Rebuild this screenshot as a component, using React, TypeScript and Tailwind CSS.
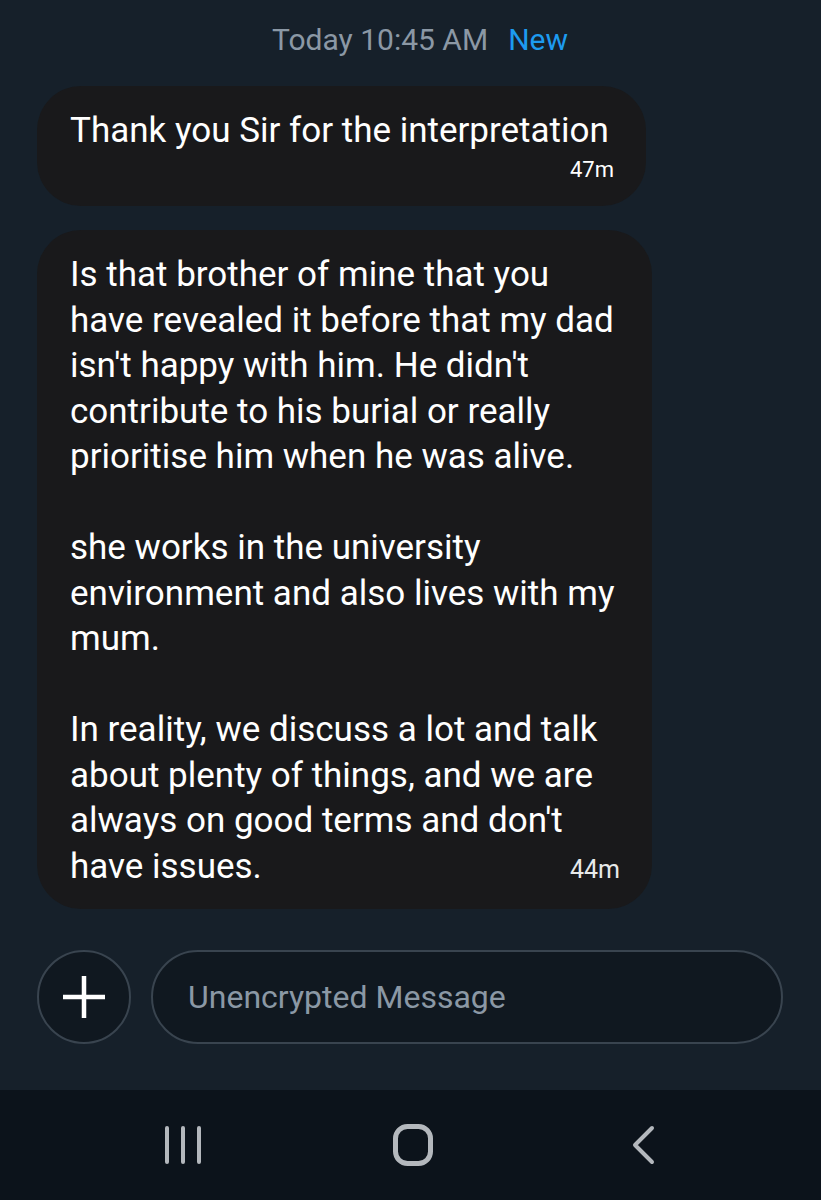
const lines = [
  "Is that brother of mine that you",
  "have revealed it before that my dad",
  "isn't happy with him. He didn't",
  "contribute to his burial or really",
  "prioritise him when he was alive.",
  "",
  "she works in the university",
  "environment and also lives with my",
  "mum.",
  "",
  "In reality, we discuss a lot and talk",
  "about plenty of things, and we are",
  "always on good terms and don't",
];

export default function App() {
  return (
    <div className="w-[821px] h-[1200px] bg-[#16202a] flex flex-col font-['Roboto',sans-serif] text-white overflow-hidden">
      <div className="flex-1 flex flex-col px-[37px]">
        {/* day divider */}
        <div className="flex justify-center items-center gap-[20px] pt-[21px] pl-[19px] text-[30px] leading-[38px]">
          <span className="text-[#8b98a5]">Today 10:45 AM</span>
          <span className="text-[#1d9bf0]">New</span>
        </div>

        {/* first bubble */}
        <div className="mt-[27px] w-[609px] h-[120px] rounded-[44px] bg-[#19191b] pl-[33px] pr-[32px] pt-[24px] flex flex-col">
          <p className="text-[35px] leading-[42px]">Thank you Sir for the interpretation</p>
          <span className="self-end mt-[5px] text-[22px] leading-[26px]">47m</span>
        </div>

        {/* second bubble */}
        <div className="mt-[24px] w-[615px] rounded-[44px] bg-[#19191b] pl-[33px] pr-[32px] pt-[22px] pb-[20px] text-[35px] leading-[45.5px]">
          {lines.map((l, i) => (
            <div key={i} className="h-[45.5px] whitespace-nowrap">{l}</div>
          ))}
          <div className="flex justify-between items-center h-[45.5px]">
            <span>have issues.</span>
            <span className="text-[25px] leading-[30px] mt-[8px] text-[#e7e9ea]">44m</span>
          </div>
        </div>

        {/* composer */}
        <div className="mt-[41px] flex items-center gap-[20px]">
          <div className="w-[94px] h-[94px] rounded-full border-2 border-[#39444f] bg-[#101820] flex items-center justify-center">
            <svg width="44" height="44" viewBox="0 0 44 44" className="text-white">
              <path d="M22 1v42M1 22h42" stroke="currentColor" strokeWidth="4.5" />
            </svg>
          </div>
          <div className="w-[632px] h-[94px] rounded-full border-2 border-[#39444f] bg-[#101820] flex items-center pl-[35px]">
            <span className="text-[32px] text-[#8b98a5]">Unencrypted Message</span>
          </div>
        </div>
      </div>

      {/* android nav bar */}
      <div className="h-[110px] bg-[#0c131b] flex items-center gap-[170px] pl-[153px]">
        <div className="w-[60px] flex justify-center">
          <svg width="38" height="40" viewBox="0 0 38 40" className="text-[#b4b8bd]">
            <path d="M3 3v34M19 3v34M35 3v34" stroke="currentColor" strokeWidth="4" strokeLinecap="round" />
          </svg>
        </div>
        <div className="w-[60px] flex justify-center">
          <svg width="40" height="42" viewBox="0 0 40 42" className="text-[#b4b8bd]">
            <rect x="2.5" y="2.5" width="35" height="37" rx="12" fill="none" stroke="currentColor" strokeWidth="5" />
          </svg>
        </div>
        <div className="w-[60px] flex justify-center">
          <svg width="26" height="40" viewBox="0 0 26 40" className="text-[#b4b8bd]">
            <path d="M22 3L5 20l17 17" fill="none" stroke="currentColor" strokeWidth="4" strokeLinecap="round" strokeLinejoin="round" />
          </svg>
        </div>
      </div>
    </div>
  );
}
